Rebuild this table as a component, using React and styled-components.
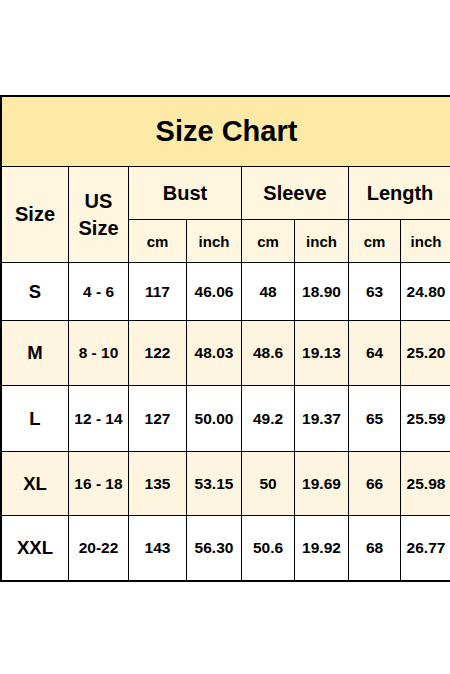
import React from 'react';
import styled, { createGlobalStyle } from 'styled-components';

const GlobalStyle = createGlobalStyle`
  html, body {
    margin: 0;
    padding: 0;
    background: #fff;
    overflow: hidden;
  }
  body {
    font-family: "Liberation Sans", Arial, sans-serif;
  }
`;

const rows = [
  { size: 'S', us: '4 - 6', bust: ['117', '46.06'], sleeve: ['48', '18.90'], length: ['63', '24.80'] },
  { size: 'M', us: '8 - 10', bust: ['122', '48.03'], sleeve: ['48.6', '19.13'], length: ['64', '25.20'] },
  { size: 'L', us: '12 - 14', bust: ['127', '50.00'], sleeve: ['49.2', '19.37'], length: ['65', '25.59'] },
  { size: 'XL', us: '16 - 18', bust: ['135', '53.15'], sleeve: ['50', '19.69'], length: ['66', '25.98'] },
  { size: 'XXL', us: '20-22', bust: ['143', '56.30'], sleeve: ['50.6', '19.92'], length: ['68', '26.77'] },
];

const App = () => (
  <>
    <GlobalStyle />
    <Page>
      <Chart>
        <Title>Size Chart</Title>

        <HeadCell $rowSpan={2} $size={20}>Size</HeadCell>
        <HeadCell $rowSpan={2} $size={20}>US<br />Size</HeadCell>
        <HeadCell $colSpan={2} $size={20}>Bust</HeadCell>
        <HeadCell $colSpan={2} $size={20}>Sleeve</HeadCell>
        <HeadCell $colSpan={2} $size={20}>Length</HeadCell>

        {['Bust', 'Sleeve', 'Length'].map((g) => (
          <React.Fragment key={g}>
            <HeadCell $size={15}>cm</HeadCell>
            <HeadCell $size={15}>inch</HeadCell>
          </React.Fragment>
        ))}

        {rows.map((r, i) => (
          <React.Fragment key={r.size}>
            <Cell $alt={i % 2 === 1} $size={18.5}>{r.size}</Cell>
            <Cell $alt={i % 2 === 1}>{r.us}</Cell>
            {[...r.bust, ...r.sleeve, ...r.length].map((v, j) => (
              <Cell key={j} $alt={i % 2 === 1}>{v}</Cell>
            ))}
          </React.Fragment>
        ))}
      </Chart>
    </Page>
  </>
);

export default App;

const Page = styled.div`
  width: 450px;
  height: 674px;
  overflow: hidden;
  padding-top: 95px;
  box-sizing: border-box;
`;

const Chart = styled.div`
  display: grid;
  width: max-content;
  grid-template-columns: 66px 59px 57px 54px 52px 53px 51px 50px;
  grid-template-rows: 69px 52px 42px 57px 64px 65px 63px 64px;
  gap: 1px;
  background: #000;
  padding: 2px 2px 2px 2px;
`;

const Title = styled.div`
  grid-column: 1 / -1;
  background: #fee9a7;
  display: flex;
  align-items: center;
  justify-content: center;
  font-size: 29px;
  font-weight: bold;
  color: #000;
`;

const HeadCell = styled.div`
  grid-row: span ${(p) => p.$rowSpan || 1};
  grid-column: span ${(p) => p.$colSpan || 1};
  background: #fff6e0;
  display: flex;
  align-items: center;
  justify-content: center;
  text-align: center;
  font-size: ${(p) => p.$size}px;
  line-height: 27px;
  font-weight: bold;
  color: #000;
`;

const Cell = styled.div`
  background: ${(p) => (p.$alt ? '#fef5e1' : '#fff')};
  display: flex;
  align-items: center;
  justify-content: center;
  font-size: ${(p) => p.$size || 15.5}px;
  font-weight: bold;
  color: #000;
`;
